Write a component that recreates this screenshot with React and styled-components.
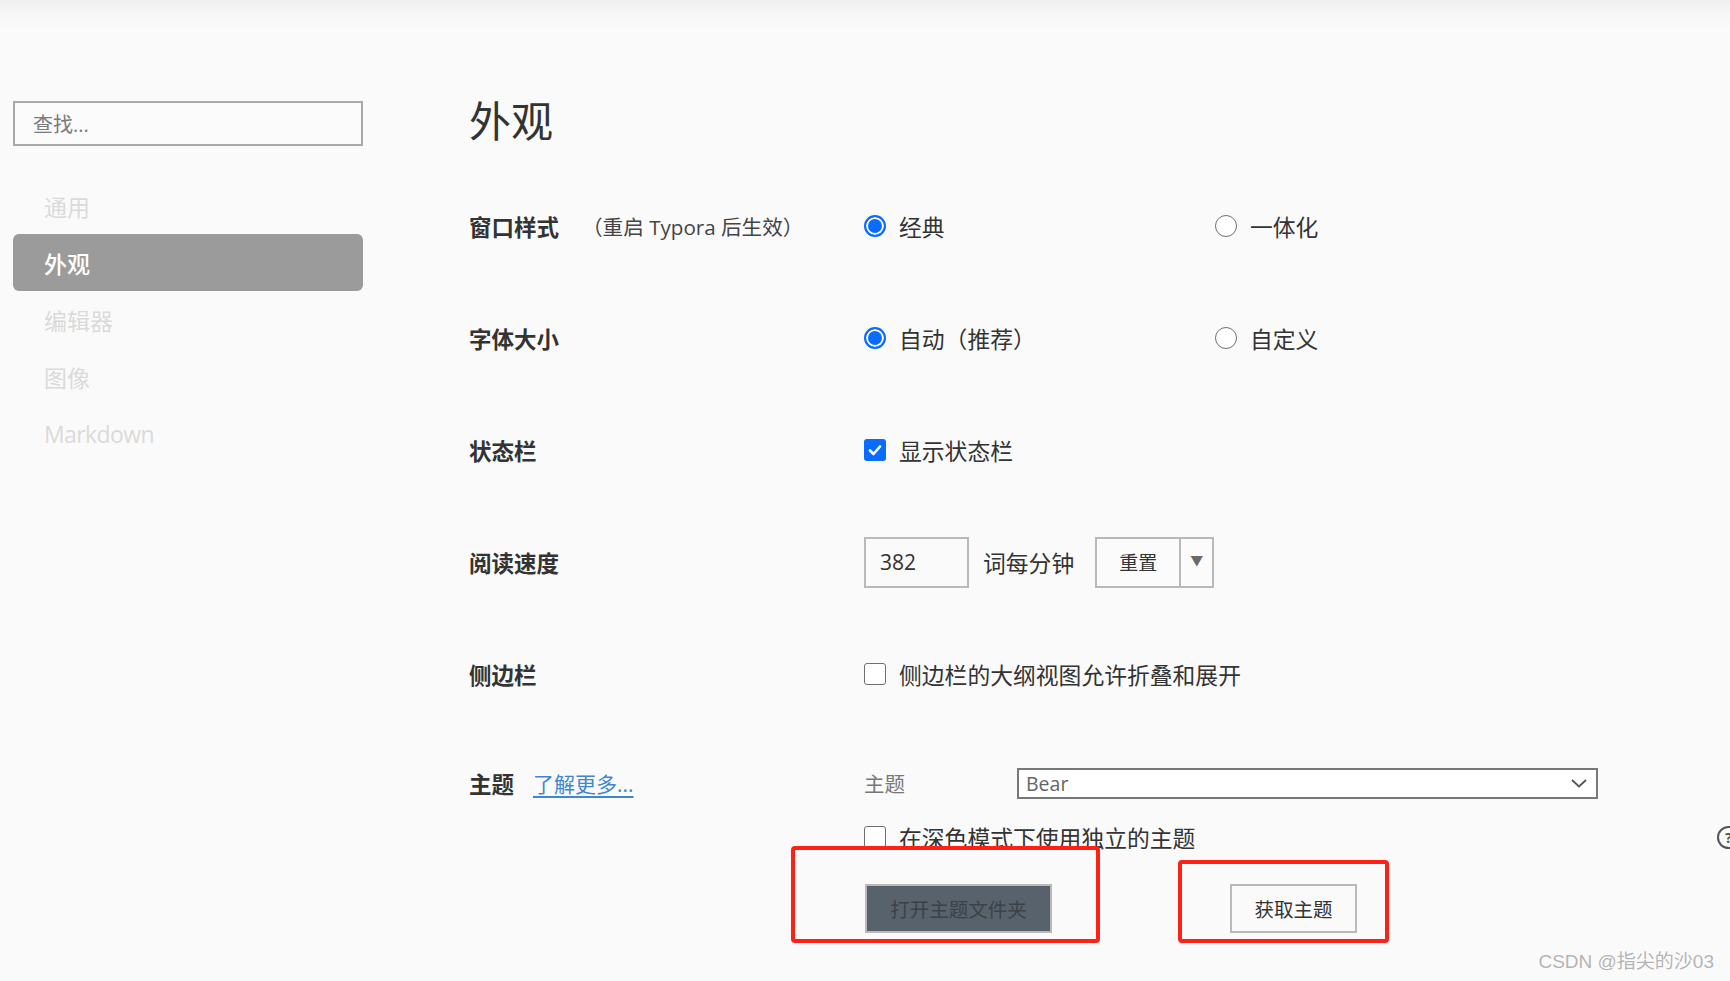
import styled, { createGlobalStyle } from 'styled-components';

const Global = createGlobalStyle`
  html, body {
    margin: 0;
    padding: 0;
    width: 1730px;
    height: 981px;
    overflow: hidden;
    background: linear-gradient(#eeeeee 0px, #f7f7f7 14px, #fafafa 30px, #fafafa 100%);
    font-family: "Open Sans", "Noto Sans CJK SC", sans-serif;
    color: #333;
  }
`

const Page = styled.div`
  position: relative;
  display: flex;
  width: 1730px;
  height: 981px;
`

const Sidebar = styled.aside`
  width: 350px;
  padding: 101px 0 0 13px;
  flex-shrink: 0;
`

const Search = styled.div`
  box-sizing: border-box;
  height: 45px;
  border: 2px solid #a9a9a9;
  background: #fbfbfb;
  padding-left: 18px;
  display: flex;
  align-items: center;
  font-size: 20px;
  color: #7a7a7a;
`

const Nav = styled.ul`
  list-style: none;
  margin: 31px 0 0;
  padding: 0;
`

const NavItem = styled.li`
  height: 57px;
  border-radius: 6px;
  padding-left: 31px;
  display: flex;
  align-items: center;
  font-size: 23px;
  letter-spacing: ${(p) => (p.latin ? '-0.6px' : '0')};
  color: ${(p) => (p.active ? '#fff' : '#dadada')};
  background: ${(p) => (p.active ? '#9b9b9b' : 'transparent')};
  font-weight: ${(p) => (p.active ? 500 : 400)};
`

const Main = styled.main`
  margin-left: 106px;
  flex: 1;
`

const Title = styled.h1`
  margin: 97px 0 0;
  font-size: 42px;
  line-height: 48px;
  font-weight: 400;
  color: #333;
`

const Rows = styled.div`
  margin-top: 25px;
`

const Row = styled.div`
  display: grid;
  grid-template-columns: 395px 1fr;
  align-items: center;
  height: 112px;
`

const Label = styled.div`
  display: flex;
  align-items: center;
  font-size: 22.5px;
  font-weight: 700;
  color: #333;
`

const Note = styled.span`
  margin-left: 23px;
  font-size: 20.6px;
  font-weight: 400;
  color: #444;
`

const Link = styled.a`
  margin-left: 19px;
  font-size: 21px;
  font-weight: 400;
  color: #3f86d1;
  text-decoration: underline;
  text-underline-offset: 4px;
`

const Controls = styled.div`
  display: flex;
  align-items: center;
`

const Option = styled.label`
  width: ${(p) => p.w || 'auto'};
  display: flex;
  align-items: center;
  gap: 13px;
  font-size: 22.8px;
  color: #333;
`

const Radio = styled.span`
  box-sizing: border-box;
  width: 22px;
  height: 22px;
  border-radius: 50%;
  background: ${(p) => (p.on ? '#0a6cff' : '#fff')};
  border: ${(p) => (p.on ? '2px solid #0a6cff' : '1.5px solid #6f6f6f')};
  box-shadow: ${(p) => (p.on ? 'inset 0 0 0 2px #fff' : 'none')};
  flex-shrink: 0;
`

const Box = styled.span`
  box-sizing: border-box;
  width: 22px;
  height: 22px;
  border-radius: 3px;
  background: ${(p) => (p.on ? '#0a6cff' : '#fff')};
  border: ${(p) => (p.on ? 'none' : '1.5px solid #6f6f6f')};
  display: flex;
  align-items: center;
  justify-content: center;
  flex-shrink: 0;
`

const NumInput = styled.div`
  box-sizing: border-box;
  width: 105px;
  height: 51px;
  border: 2px solid #b9b9b9;
  display: flex;
  align-items: center;
  padding-left: 14px;
  font-size: 21px;
  color: #333;
`

const Unit = styled.span`
  margin: 0 21px 0 14px;
  font-size: 22.8px;
  color: #333;
`

const SplitButton = styled.div`
  box-sizing: border-box;
  height: 51px;
  display: flex;
  border: 2px solid #b9b9b9;
  background: #fbfbfb;
`

const SplitMain = styled.span`
  width: 82px;
  display: flex;
  align-items: center;
  justify-content: center;
  font-size: 19px;
  color: #333;
  border-right: 2px solid #b9b9b9;
`

const SplitArrow = styled.span`
  width: 31px;
  display: flex;
  align-items: center;
  justify-content: center;
  padding-bottom: 6px;
  font-size: 13px;
  color: #6a6a6a;
`

const ThemeRow = styled(Row)`
  height: 40px;
  margin-top: 33px;
`

const SubLabel = styled.span`
  width: 153px;
  font-size: 20.5px;
  color: #777;
`

const Select = styled.div`
  box-sizing: border-box;
  width: 581px;
  height: 31px;
  border: 2px solid #777;
  background: #fff;
  display: flex;
  align-items: center;
  justify-content: space-between;
  padding: 0 8px 0 7px;
  font-size: 19.5px;
  color: #666;
`

const DarkRow = styled.div`
  display: flex;
  align-items: center;
  height: 30px;
  margin: 19px 0 0 395px;
  width: 876px;
`

const Help = styled.span`
  margin-left: auto;
  box-sizing: border-box;
  width: 23px;
  height: 23px;
  border: 2px solid #555;
  border-radius: 50%;
  display: flex;
  align-items: center;
  justify-content: center;
  font-size: 15px;
  font-weight: 700;
  color: #555;
  flex-shrink: 0;
`

const Buttons = styled.div`
  display: flex;
  margin: 32px 0 0 396px;
`

const Anchor = styled.span`
  position: relative;
  display: inline-block;
  margin-left: ${(p) => p.ml || 0};
`

const Button = styled.div`
  box-sizing: border-box;
  height: 49px;
  width: ${(p) => p.w};
  border: 2px solid #b9b9b9;
  background: ${(p) => (p.dark ? '#58626c' : '#fafafa')};
  color: ${(p) => (p.dark ? '#3b4148' : '#333')};
  display: flex;
  align-items: center;
  justify-content: center;
  font-size: 19.5px;
`

const Mark = styled.span`
  position: absolute;
  left: ${(p) => p.l}px;
  top: ${(p) => p.t}px;
  right: ${(p) => p.r}px;
  bottom: ${(p) => p.b}px;
  border: 4px solid #ff2016;
  border-radius: 4px;
  pointer-events: none;
`

const Watermark = styled.div`
  position: absolute;
  right: 16px;
  bottom: 8px;
  font-family: "Liberation Sans", "Noto Sans CJK SC", sans-serif;
  font-size: 19px;
  color: #b4b4b4;
  text-shadow: 0 0 2px #fff;
`

function Check() {
  return (
    <svg width="16" height="16" viewBox="0 0 16 16">
      <path d="M3 8.5 L6.5 12 L13 4.5" fill="none" stroke="#fff" strokeWidth="2.6" strokeLinecap="round" strokeLinejoin="round" />
    </svg>
  )
}

function Chevron() {
  return (
    <svg width="18" height="12" viewBox="0 0 18 12">
      <path d="M2 3 L9 9.5 L16 3" fill="none" stroke="#555" strokeWidth="1.8" />
    </svg>
  )
}

export default function App() {
  return (
    <Page>
      <Global />
      <Sidebar>
        <Search>查找...</Search>
        <Nav>
          <NavItem>通用</NavItem>
          <NavItem active>外观</NavItem>
          <NavItem>编辑器</NavItem>
          <NavItem>图像</NavItem>
          <NavItem latin>Markdown</NavItem>
        </Nav>
      </Sidebar>

      <Main>
        <Title>外观</Title>
        <Rows>
          <Row>
            <Label>窗口样式<Note>（重启 Typora 后生效）</Note></Label>
            <Controls>
              <Option w="351px"><Radio on />经典</Option>
              <Option><Radio />一体化</Option>
            </Controls>
          </Row>
          <Row>
            <Label>字体大小</Label>
            <Controls>
              <Option w="351px"><Radio on />自动（推荐）</Option>
              <Option><Radio />自定义</Option>
            </Controls>
          </Row>
          <Row>
            <Label>状态栏</Label>
            <Controls>
              <Option><Box on><Check /></Box>显示状态栏</Option>
            </Controls>
          </Row>
          <Row>
            <Label>阅读速度</Label>
            <Controls>
              <NumInput>382</NumInput>
              <Unit>词每分钟</Unit>
              <SplitButton>
                <SplitMain>重置</SplitMain>
                <SplitArrow>▼</SplitArrow>
              </SplitButton>
            </Controls>
          </Row>
          <Row>
            <Label>侧边栏</Label>
            <Controls>
              <Option><Box />侧边栏的大纲视图允许折叠和展开</Option>
            </Controls>
          </Row>
        </Rows>

        <ThemeRow>
          <Label>主题<Link>了解更多...</Link></Label>
          <Controls>
            <SubLabel>主题</SubLabel>
            <Select>Bear<Chevron /></Select>
          </Controls>
        </ThemeRow>

        <DarkRow>
          <Option><Box />在深色模式下使用独立的主题</Option>
          <Help>?</Help>
        </DarkRow>

        <Buttons>
          <Anchor>
            <Button dark w="187px">打开主题文件夹</Button>
            <Mark l={-74} t={-38} r={-48} b={-10} />
          </Anchor>
          <Anchor ml="178px">
            <Button w="127px">获取主题</Button>
            <Mark l={-52} t={-24} r={-32} b={-10} />
          </Anchor>
        </Buttons>
      </Main>

      <Watermark>CSDN @指尖的沙03</Watermark>
    </Page>
  )
}
